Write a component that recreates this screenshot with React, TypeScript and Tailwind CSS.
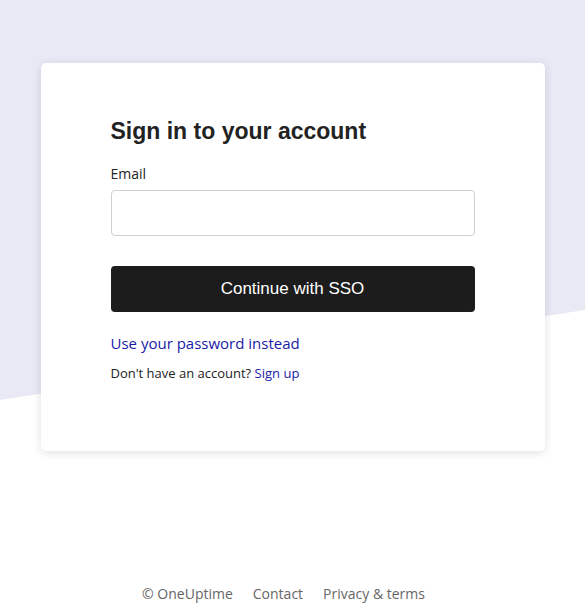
import React from "react"

const bodyFont = { fontFamily: '"Open Sans", "Noto Sans", sans-serif' }

export default function App() {
  return (
    <div className="relative min-h-[615px] w-full overflow-hidden bg-white" style={bodyFont}>
      {/* slanted lavender backdrop */}
      <div className="absolute inset-x-0 top-0 h-[400px] bg-[#e9e8f5] [clip-path:polygon(0_0,100%_0,100%_310px,0_400px)]" />

      <div className="relative flex min-h-[615px] flex-col items-center">
        <div className="mt-[63px] w-[504px] rounded-[5px] bg-white px-[70px] pt-[53px] pb-[68px] shadow-[0_2px_10px_rgba(0,0,0,0.12)]">
          <h1
            className="text-[23px] font-semibold leading-[30px] text-[#222]"
            style={{ fontFamily: '"Liberation Sans", Arial, sans-serif' }}
          >
            Sign in to your account
          </h1>

          <label className="mt-[18px] block text-[14px] leading-[20px] text-[#222]">Email</label>
          <input
            type="email"
            className="mt-[6px] block h-[46px] w-full rounded-[4px] border border-[#cfcfcf] bg-white px-3 outline-none"
          />

          <button
            type="button"
            className="mt-[30px] flex h-[46px] w-full items-center justify-center rounded-[4px] bg-[#1c1c1c] text-[17px] text-white"
            style={{ fontFamily: '"Liberation Sans", Arial, sans-serif' }}
          >
            Continue with SSO
          </button>

          <a href="#" className="mt-[20px] block text-[15px] leading-[22px] text-[#1a1aa8]">
            Use your password instead
          </a>

          <p className="mt-[9px] text-[13px] leading-[20px] text-[#222]">
            Don't have an account? <a href="#" className="text-[#1a1aa8]">Sign up</a>
          </p>
        </div>

        <div className="mt-auto mb-[11px] flex gap-[20px] pr-[18px] text-[14px] leading-[20px] text-[#666]">
          <span>© OneUptime</span>
          <a href="#">Contact</a>
          <a href="#">Privacy &amp; terms</a>
        </div>
      </div>
    </div>
  )
}
